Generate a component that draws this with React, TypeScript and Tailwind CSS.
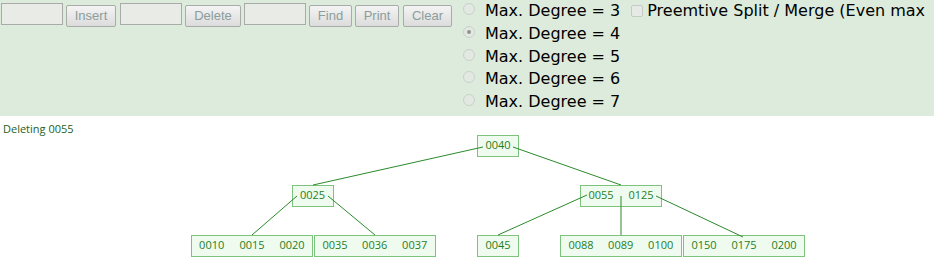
import React from "react";

type Node = { x: number; y: number; w: number; keys: { k: string; cx: number }[] };

const nodes: Node[] = [
  { x: 477.5, y: 19.5, w: 41, keys: [{ k: "0040", cx: 498 }] },
  { x: 292.5, y: 69.5, w: 41, keys: [{ k: "0025", cx: 312.5 }] },
  {
    x: 580.5,
    y: 69.5,
    w: 81,
    keys: [
      { k: "0055", cx: 601 },
      { k: "0125", cx: 641 },
    ],
  },
  {
    x: 191.5,
    y: 119.5,
    w: 121,
    keys: [
      { k: "0010", cx: 211.7 },
      { k: "0015", cx: 252 },
      { k: "0020", cx: 292 },
    ],
  },
  {
    x: 314.5,
    y: 119.5,
    w: 121,
    keys: [
      { k: "0035", cx: 335 },
      { k: "0036", cx: 374.7 },
      { k: "0037", cx: 414.7 },
    ],
  },
  { x: 477.5, y: 119.5, w: 41, keys: [{ k: "0045", cx: 498 }] },
  {
    x: 560.5,
    y: 119.5,
    w: 121,
    keys: [
      { k: "0088", cx: 581 },
      { k: "0089", cx: 620.7 },
      { k: "0100", cx: 660.7 },
    ],
  },
  {
    x: 683.5,
    y: 119.5,
    w: 121,
    keys: [
      { k: "0150", cx: 704 },
      { k: "0175", cx: 744 },
      { k: "0200", cx: 784 },
    ],
  },
];

// parent key edge -> child top
const edges: [number, number, number, number][] = [
  [483, 31, 313, 69],
  [513, 31, 621, 69],
  [297, 80, 252, 119],
  [328, 80, 375, 119],
  [587, 79, 498, 119],
  [621, 80, 621, 119],
  [656, 80, 743, 121],
];

function ControlInput() {
  return <div className="h-[22px] w-[62px] border border-[#a9aba9] bg-[#e9ebe6]" />;
}

function ControlButton({ label, w }: { label: string; w: string }) {
  return (
    <button
      disabled
      className={`h-[22px] ${w} rounded-[2px] border border-[#a8aba8] bg-gradient-to-b from-[#f4f4f4] to-[#dcdcdc] text-[13px] leading-none text-[#8b9d9c] font-['Liberation_Sans',Arial,sans-serif]`}
    >
      {label}
    </button>
  );
}

function Radio({ checked }: { checked?: boolean }) {
  return (
    <span className="mt-[3px] flex h-[12px] w-[12px] items-center justify-center rounded-full border border-[#c9d1c9] bg-[#e3e8e3]">
      {checked && <span className="h-[4px] w-[4px] rounded-full bg-[#8f948f]" />}
    </span>
  );
}

export default function App() {
  return (
    <div className="h-[278px] w-[934px] overflow-hidden bg-white">
      <div className="flex h-[116px] bg-[#dcebdc] font-['DejaVu_Sans',Verdana,sans-serif] text-[16px] text-black">
        <div className="flex items-start pl-[1px] pt-[3px]">
          <ControlInput />
          <div className="ml-[3px]">
            <ControlButton label="Insert" w="w-[50px]" />
          </div>
          <div className="ml-[4px]">
            <ControlInput />
          </div>
          <div className="ml-[3px]">
            <ControlButton label="Delete" w="w-[56px]" />
          </div>
          <div className="ml-[3px]">
            <ControlInput />
          </div>
          <div className="ml-[3px]">
            <ControlButton label="Find" w="w-[43px]" />
          </div>
          <div className="ml-[3px]">
            <ControlButton label="Print" w="w-[44px]" />
          </div>
          <div className="ml-[4px]">
            <ControlButton label="Clear" w="w-[49px]" />
          </div>
        </div>

        <div className="ml-[11px] flex flex-col">
          {[3, 4, 5, 6, 7].map((d) => (
            <div key={d} className="flex h-[22.75px] items-start leading-[22.75px]">
              <Radio checked={d === 4} />
              <span className="ml-[10px] whitespace-nowrap">Max. Degree = {d}</span>
            </div>
          ))}
        </div>

        <div className="ml-[11px] flex h-[22.75px] items-start leading-[22.75px]">
          <span className="mt-[5px] h-[12px] w-[12px] shrink-0 rounded-[2px] border border-[#c6cac6] bg-[#e6e9e6]" />
          <span className="ml-[4px] whitespace-nowrap">Preemtive Split / Merge (Even max</span>
        </div>
      </div>

      <svg width="934" height="162" className="block font-['Open_Sans',sans-serif]">
        <text x="3" y="17" fontSize="11" fill="#235f23">
          Deleting 0055
        </text>
        {nodes.map((n, i) => (
          <rect key={i} x={n.x} y={n.y} width={n.w} height={21} fill="#effbef" stroke="#7dc27d" strokeWidth="1" />
        ))}
        {edges.map(([x1, y1, x2, y2], i) => (
          <line key={i} x1={x1} y1={y1} x2={x2} y2={y2} stroke="#2b8a2b" strokeWidth="1" />
        ))}
        {nodes.map((n, i) =>
          n.keys.map((key) => (
            <text
              key={`${i}-${key.k}`}
              x={key.cx}
              y={n.y === 19.5 ? 33 : n.y === 69.5 ? 83 : 133}
              fontSize="11"
              textAnchor="middle"
              fill="#1f801f"
            >
              {key.k}
            </text>
          ))
        )}
      </svg>
    </div>
  );
}
